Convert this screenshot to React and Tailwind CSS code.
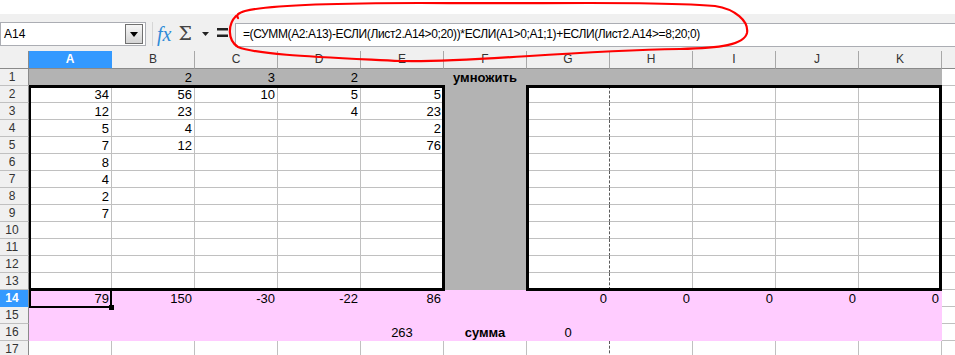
import React from 'react';

const COLS = ['A', 'B', 'C', 'D', 'E', 'F', 'G', 'H', 'I', 'J', 'K'];

// cell fill variants (border takes the fill colour so gridlines disappear)
const FILL = {
  white: 'bg-white border-[#c0c0c0]',
  gray: 'bg-[#b3b3b3] border-[#b3b3b3]',
  pink: 'bg-[#ffccff] border-[#ffccff]',
  dashed: 'bg-white border-b-[#c0c0c0] border-r-[#5a5a5a] [border-right-style:dashed]',
};

const ALIGN = {
  r: 'text-right pr-[2px]',
  c: 'text-center',
};

// row data: values by column letter, value may be [text, align, bold]
const ROWS = {
  1: { B: '2', C: '3', D: '2', F: ['умножить', 'c', true] },
  2: { A: '34', B: '56', C: '10', D: '5', E: '5' },
  3: { A: '12', B: '23', D: '4', E: '23' },
  4: { A: '5', B: '4', E: '2' },
  5: { A: '7', B: '12', E: '76' },
  6: { A: '8' },
  7: { A: '4' },
  8: { A: '2' },
  9: { A: '7' },
  14: { A: '79', B: '150', C: '-30', D: '-22', E: '86', G: '0', H: '0', I: '0', J: '0', K: '0' },
  16: { E: ['263', 'c'], F: ['сумма', 'c', true], G: ['0', 'c'] },
};

function fillFor(row, col) {
  if (row === 1) return 'gray';
  if (row >= 14 && row <= 16) return 'pink';
  if (col === 'F' && row <= 13) return 'gray';
  if (col === 'G') return 'dashed';
  return 'white';
}

function Cell({ row, col }) {
  const raw = (ROWS[row] || {})[col];
  const [text, align, bold] = Array.isArray(raw) ? raw : [raw, 'r', false];
  return (
    <div
      className={`h-[17px] box-border border-r border-b overflow-visible whitespace-nowrap text-[13px] leading-[17px] text-black ${FILL[fillFor(row, col)]} ${ALIGN[align]} ${bold ? 'font-bold' : ''}`}
    >
      {text}
    </div>
  );
}

function RowHeader({ n }) {
  const active = n === 14;
  return (
    <div
      className={`h-[17px] box-border border-b border-r pr-[4px] text-center text-[12px] leading-[16px] ${
        active
          ? 'bg-[#3399ff] border-[#3399ff] border-r-[#8a8a8a] text-white font-bold'
          : 'bg-[#f0f0f0] border-b-[#c0c0c0] border-r-[#8a8a8a] text-[#333]'
      }`}
    >
      {n}
    </div>
  );
}

function Toolbar() {
  return (
    <div className="h-[51px] flex flex-col">
      <div className="h-[14px] bg-white" />
      <div className="flex-1 bg-[#f0f0f0] flex items-start pt-[8px]">
        {/* name box */}
        <div className="w-[146px] h-[24px] box-border border border-[#abadb3] bg-white flex items-center">
          <span className="flex-1 pl-[3px] text-[12px] leading-[22px] text-black">A14</span>
          <div className="w-[18px] h-[20px] mr-[2px] box-border border border-[#707070] bg-gradient-to-b from-[#f6f6f6] to-[#d4d4d4] flex items-center justify-center">
            <svg width="8" height="5" viewBox="0 0 8 5">
              <path d="M0 0H8L4 5Z" fill="#000" />
            </svg>
          </div>
        </div>
        <div className="ml-[6px] w-px h-[24px] bg-[#d6d6d6]" />
        <span className="ml-[4px] mt-[2px] text-[20px] leading-[20px] italic text-[#2e8bd8] font-['Liberation_Serif',serif]">
          fx
        </span>
        <span className="ml-[7px] mt-[1px] text-[19px] leading-[20px] text-[#444] font-['DejaVu_Serif',serif] font-light">
          Σ
        </span>
        <svg className="ml-[10px] mt-[10px]" width="7" height="4" viewBox="0 0 7 4">
          <path d="M0 0H7L3.5 4Z" fill="#222" />
        </svg>
        <svg className="ml-[8px] mt-[6px]" width="11" height="10" viewBox="0 0 11 10">
          <rect x="0" y="0" width="11" height="2.5" fill="#222" />
          <rect x="0" y="6.5" width="11" height="2.5" fill="#222" />
        </svg>
        <div className="ml-[7px] mt-[1px] flex-1 h-[24px] box-border border border-r-0 border-[#abadb3] bg-white pl-[7px] text-[12px] tracking-[-0.37px] leading-[21px] text-black whitespace-nowrap">
          =(СУММ(A2:A13)-ЕСЛИ(Лист2.A14&gt;0;20))*ЕСЛИ(A1&gt;0;A1;1)+ЕСЛИ(Лист2.A14&gt;=8;20;0)
        </div>
      </div>
    </div>
  );
}

function Sheet() {
  const rows = Array.from({ length: 17 }, (_, i) => i + 1);
  return (
    <div className="grid grid-cols-[29px_repeat(11,83px)_1fr]">
      {/* column headers */}
      <div className="h-[18px] box-border border-r border-b border-[#8a8a8a] bg-[#f0f0f0]" />
      {COLS.map((c) => (
        <div
          key={c}
          className={`h-[18px] box-border border-r border-b text-center text-[12px] leading-[17px] ${
            c === 'A'
              ? 'bg-[#3399ff] border-[#3399ff] border-b-[#8a8a8a] text-white font-bold'
              : 'bg-[#f0f0f0] border-r-[#a8a8a8] border-b-[#8a8a8a] text-[#333]'
          }`}
        >
          {c}
        </div>
      ))}
      <div className="h-[18px] box-border border-b border-[#8a8a8a] bg-[#f0f0f0]" />

      {rows.map((r) => (
        <React.Fragment key={r}>
          <RowHeader n={r} />
          {COLS.map((c) => (
            <Cell key={c} row={r} col={c} />
          ))}
          <div className="h-[17px] box-border border-b border-[#c0c0c0] bg-white" />
        </React.Fragment>
      ))}
    </div>
  );
}

export default function App() {
  return (
    <div className="relative w-[955px] h-[355px] overflow-hidden bg-white font-['Liberation_Sans',Arial,sans-serif]">
      <Toolbar />
      <Sheet />

      {/* thick outline A2:E13 */}
      <div className="absolute left-[29px] top-[85px] w-[416px] h-[206px] box-border border-t-[3px] border-r-[3px] border-b-[3px] border-l-2 border-black pointer-events-none" />
      {/* thick outline G2:K13 */}
      <div className="absolute left-[526px] top-[85px] w-[416px] h-[206px] box-border border-[3px] border-black pointer-events-none" />
      {/* cursor on A14 */}
      <div className="absolute left-[29px] top-[289px] w-[83px] h-[19px] box-border border-2 border-black pointer-events-none" />
      <div className="absolute left-[109px] top-[305px] w-[5px] h-[5px] bg-black" />

      {/* red hand-drawn annotation */}
      <svg className="absolute left-0 top-0 pointer-events-none" width="955" height="355">
        <path
          d="M236 16 C228 24 227 40 238 47 C258 55 320 57 400 61 C470 63 560 51 680 49 C720 48 744 45 747 33 C749 21 735 9 715 6 C650 1 550 4 420 3 C330 3 265 6 245 11 C238 13 236 15 238 18"
          fill="none"
          stroke="#ff0000"
          strokeWidth="2.2"
          strokeLinecap="round"
        />
      </svg>
    </div>
  );
}
